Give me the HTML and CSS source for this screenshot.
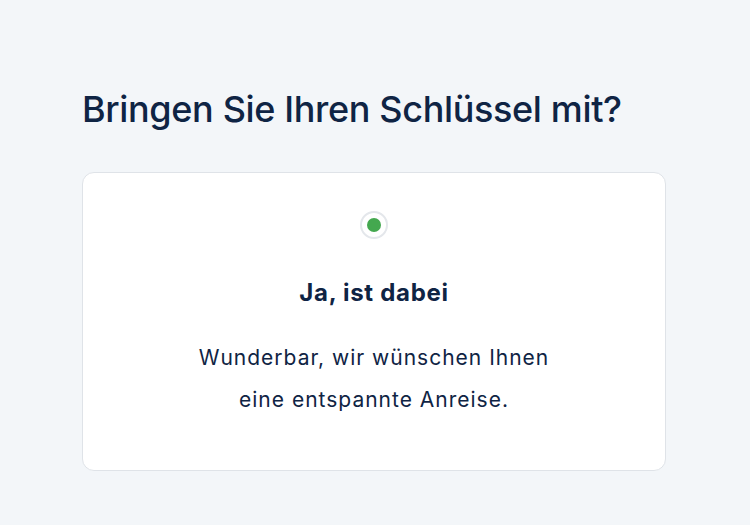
FILE: index.html
```html
<!DOCTYPE html>
<html lang="de">
<head>
<meta charset="utf-8">
<link rel="stylesheet" href="styles.css">
</head>
<body>
<main class="page">
  <h1 class="title">Bringen Sie Ihren Schlüssel mit?</h1>
  <section class="card">
    <div class="radio"><span class="radio-dot"></span></div>
    <h2 class="card-title">Ja, ist dabei</h2>
    <p class="card-text">Wunderbar, wir wünschen Ihnen<br>eine entspannte Anreise.</p>
  </section>
</main>
</body>
</html>
```

FILE: styles.css
```css
html, body {
  margin: 0;
  padding: 0;
  background: #f3f6f9;
  font-family: Inter, "Noto Sans", sans-serif;
  color: #0f2444;
}
.page {
  width: 584px;
  padding: 85px 0 0 82px;
}
.title {
  margin: 0 0 39px;
  font-size: 36px;
  font-weight: 500;
  line-height: 48px;
  letter-spacing: -0.35px;
}
.card {
  box-sizing: border-box;
  height: 299px;
  background: #fff;
  border: 1px solid #dfe3e8;
  border-radius: 12px;
  display: flex;
  flex-direction: column;
  align-items: center;
  padding-top: 38px;
}
.radio {
  box-sizing: border-box;
  width: 28px;
  height: 28px;
  border-radius: 50%;
  border: 2px solid #e4e7eb;
  display: flex;
  align-items: center;
  justify-content: center;
}
.radio-dot {
  width: 14px;
  height: 14px;
  border-radius: 50%;
  background: #44a84f;
}
.card-title {
  margin: 39px 0 0;
  font-size: 24px;
  font-weight: 700;
  line-height: 30px;
  letter-spacing: 0.7px;
}
.card-text {
  margin: 29px 0 0;
  font-size: 21px;
  font-weight: 400;
  line-height: 42px;
  letter-spacing: 1px;
  text-align: center;
}
```
